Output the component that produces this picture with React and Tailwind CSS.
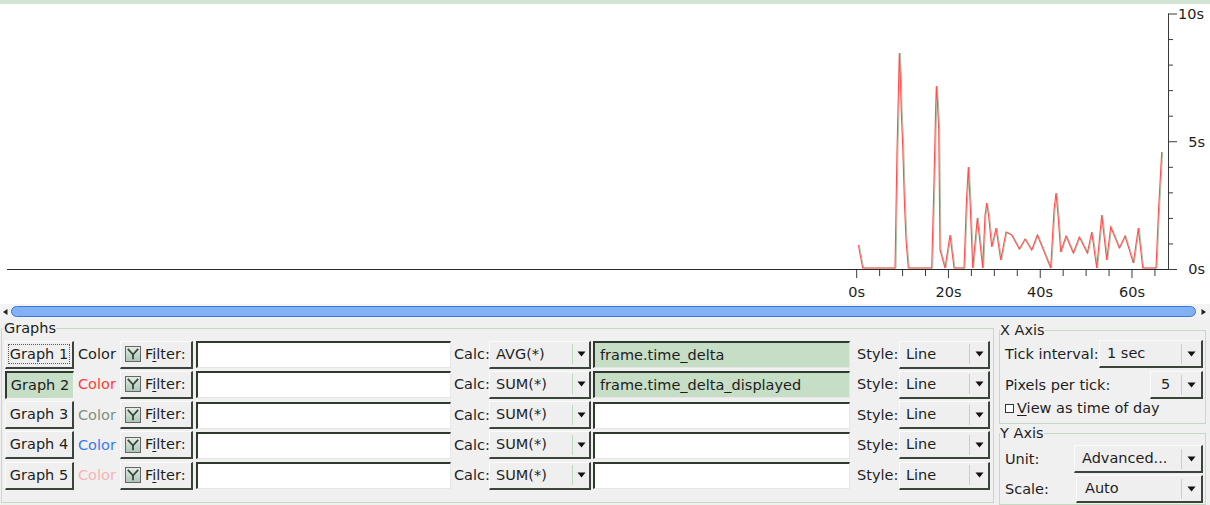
import React from "react";

const redLine = [
  [858.3, 245], [862.7, 268], [895, 268], [897, 150], [898.2, 100], [899.3, 53], [900.3, 75],
  [901.2, 110], [902.7, 146], [904.5, 205], [906, 240], [908.3, 268], [931.7, 268], [934, 180],
  [935.6, 110], [936.3, 86], [937.3, 100], [938.7, 130], [940, 250], [945, 268], [950, 235],
  [954, 268], [964, 268], [966.5, 200], [968.3, 167], [970, 200], [972.7, 268], [977.3, 218],
  [982.7, 268], [985, 215], [986.7, 203], [988.5, 215], [991.7, 247], [996, 228], [1000.7, 260],
  [1006, 232], [1011.7, 235], [1019.3, 249], [1025, 239], [1031.7, 250], [1037.3, 235],
  [1050.7, 268], [1054, 210], [1056, 193], [1058, 215], [1060.7, 252], [1066, 236],
  [1073.3, 253], [1079.3, 237], [1087.3, 253], [1091.7, 232], [1096.7, 268], [1101.7, 215],
  [1106.7, 260], [1110.7, 227], [1119.3, 248], [1125, 236], [1133.3, 263], [1138.3, 228],
  [1142.7, 268], [1156, 268], [1158.5, 210], [1161.7, 152],
];

const toPoints = (arr, dx = 0) => arr.map(([x, y]) => `${x + dx},${y}`).join(" ");

const Chart = () => {
  const yTicks = Array.from({ length: 11 }, (_, i) => 269.5 - i * 25.55);
  const xTicks = Array.from({ length: 14 }, (_, i) => 856.7 + i * 22.94);
  return (
    <svg width="1210" height="300" viewBox="0 4 1210 300" className="block bg-white">
      <line x1="7" y1="269.5" x2="1168" y2="269.5" stroke="#2a2a2a" strokeWidth="1" />
      <line x1="1168.5" y1="13.5" x2="1168.5" y2="270" stroke="#3a3a3a" strokeWidth="1" />
      {yTicks.map((y, i) => (
        <line
          key={i}
          x1="1168"
          y1={y}
          x2={i % 5 === 0 ? 1177 : 1173}
          y2={y}
          stroke="#3a3a3a"
          strokeWidth="1"
        />
      ))}
      {xTicks.map((x, i) => (
        <line
          key={i}
          x1={x}
          y1="270"
          x2={x}
          y2={i % 4 === 0 ? 278 : 276}
          stroke="#3a3a3a"
          strokeWidth="1"
        />
      ))}
      <polyline points={toPoints(redLine, 1)} fill="none" stroke="#a9c9a9" strokeWidth="1" />
      <polyline points={toPoints(redLine)} fill="none" stroke="#ff4f4f" strokeWidth="1.1" />
      <g fill="#1e1e1e" fontSize="14.5" fontFamily="DejaVu Sans, sans-serif">
        <text x="1178" y="19">10s</text>
        <text x="1205" y="147" textAnchor="end">5s</text>
        <text x="1205" y="274" textAnchor="end">0s</text>
        <text x="856.7" y="297" textAnchor="middle">0s</text>
        <text x="948.5" y="297" textAnchor="middle">20s</text>
        <text x="1040" y="297" textAnchor="middle">40s</text>
        <text x="1132" y="297" textAnchor="middle">60s</text>
      </g>
    </svg>
  );
};

const Arrow = () => (
  <svg width="9" height="6" viewBox="0 0 9 6">
    <path d="M0.5 0.5 H8.5 L4.5 5.5 Z" fill="#111" />
  </svg>
);

const Combo = ({ value, width, pad = "pl-[6px]", arrowW = "w-[16px]" }) => (
  <div
    className={`flex h-[28px] shrink-0 items-center bg-[#efefef] border-t border-l border-t-[#fbfbfb] border-l-[#fbfbfb] border-r-2 border-b-2 border-r-[#3a443a] border-b-[#3a443a] ${width}`}
  >
    <span className={`flex-1 ${pad}`}>{value}</span>
    <span className="h-[20px] w-px bg-[#bcd8bc]" />
    <span className={`flex justify-center ${arrowW}`}>
      <Arrow />
    </span>
  </div>
);

const Field = ({ value, width, green }) => (
  <div
    className={`flex h-[27px] shrink-0 items-center pl-[5px] border-t-2 border-l-2 border-t-[#2f3a2f] border-l-[#2f3a2f] border-b border-r border-b-[#e6e6e6] border-r-[#e6e6e6] ${width} ${
      green ? "bg-[#c6ddc6]" : "bg-white"
    }`}
  >
    {value}
  </div>
);

const FilterIcon = () => (
  <svg width="16" height="16" viewBox="0 0 16 16">
    <defs>
      <linearGradient id="fg" x1="0" y1="0" x2="0" y2="1">
        <stop offset="0" stopColor="#e4eee4" />
        <stop offset="1" stopColor="#a9c6b6" />
      </linearGradient>
    </defs>
    <rect x="0.5" y="0.5" width="15" height="15" fill="url(#fg)" stroke="#666" />
    <path d="M2.8 2.8 L8 8.5 L13.2 2.8" fill="none" stroke="#3c453c" strokeWidth="1.8" />
    <path d="M8 8 V13.2" stroke="#3c453c" strokeWidth="1.8" />
  </svg>
);

const graphs = [
  { n: 1, color: "text-[#1e1e1e]", calc: "AVG(*)", field: "frame.time_delta", focus: true },
  { n: 2, color: "text-[#ff3b3b]", calc: "SUM(*)", field: "frame.time_delta_displayed", pressed: true },
  { n: 3, color: "text-[#7f907f]", calc: "SUM(*)", field: "" },
  { n: 4, color: "text-[#3a7af0]", calc: "SUM(*)", field: "" },
  { n: 5, color: "text-[#f6b4b4]", calc: "SUM(*)", field: "" },
];

const GraphRow = ({ g }) => (
  <div className="flex h-[28px] items-center">
    {g.pressed ? (
      <button className="flex h-[28px] w-[69px] shrink-0 items-center justify-center bg-[#c6ddc6] border-t-2 border-l-2 border-t-[#2f3a2f] border-l-[#2f3a2f] border-b border-r border-b-[#f4f4f4] border-r-[#f4f4f4]">
        Graph {g.n}
      </button>
    ) : (
      <button className="flex h-[28px] w-[69px] shrink-0 items-center justify-center bg-[#efefef] border-t border-l border-t-[#fbfbfb] border-l-[#fbfbfb] border-r-2 border-b-2 border-r-[#3a443a] border-b-[#3a443a]">
        <span className={g.focus ? "border border-dotted border-[#5a5a5a] px-[1px] leading-[18px]" : ""}>
          Graph {g.n}
        </span>
      </button>
    )}
    <span className={`w-[46px] shrink-0 pl-[4px] ${g.color}`}>Color</span>
    <button className="flex h-[28px] w-[73px] shrink-0 items-center gap-[4px] pl-[4px] bg-[#efefef] border-t border-l border-t-[#fbfbfb] border-l-[#fbfbfb] border-r-2 border-b-2 border-r-[#3a443a] border-b-[#3a443a]">
      <FilterIcon />
      <span>
        F<span className="underline underline-offset-2">i</span>lter:
      </span>
    </button>
    <span className="w-[3px] shrink-0" />
    <Field width="w-[255px]" />
    <span className="w-[38px] shrink-0 pl-[3px]">Calc:</span>
    <Combo value={g.calc} width="w-[102px]" />
    <span className="w-[2px] shrink-0" />
    <Field width="w-[257px]" value={g.field} green={!!g.field} />
    <span className="w-[49px] shrink-0 pl-[7px]">Style:</span>
    <Combo value="Line" width="w-[91px]" arrowW="w-[18px]" />
  </div>
);

export default function App() {
  return (
    <div className="w-[1210px] h-[505px] overflow-hidden bg-[#f0f0f0] text-[14.5px] leading-[17px] text-[#1e1e1e] font-['DejaVu_Sans',sans-serif]">
      <div className="h-[4px] bg-[#d2e5d2]" />
      <Chart />

      <div className="flex h-[14px] bg-[#f3f3f3]">
        <div className="flex w-[11px] items-center justify-center pt-[2px]">
          <svg width="5" height="6" viewBox="0 0 5 6">
            <path d="M4.5 0 V6 L0 3 Z" fill="#222" />
          </svg>
        </div>
        <div className="mt-[2px] h-[11px] flex-1 rounded-full bg-[#82b2f4] border border-[#3878de]" />
        <div className="flex w-[14px] items-center justify-center pt-[2px]">
          <svg width="5" height="6" viewBox="0 0 5 6">
            <path d="M0.5 0 V6 L5 3 Z" fill="#222" />
          </svg>
        </div>
      </div>

      <div className="flex pl-[1px]">
        <fieldset className="mt-[2px] h-[183px] w-[993px] shrink-0 border border-[#c3dac3]">
          <legend className="leading-[17px] pl-[2px]">Graphs</legend>
          <div className="flex flex-col gap-[2.25px] pl-[3px] pt-[3.5px]">
            {graphs.map((g) => (
              <GraphRow key={g.n} g={g} />
            ))}
          </div>
        </fieldset>

        <div className="ml-[5px] flex w-[207px] shrink-0 flex-col">
          <fieldset className="mt-[4px] border border-[#c3dac3]">
            <legend className="leading-[17px]">X Axis</legend>
            <div className="flex flex-col pl-[5px] pr-[1px] pt-[1px] pb-[5px]">
              <div className="flex h-[28px] items-center">
                <span className="w-[94px] shrink-0">Tick interval:</span>
                <Combo value="1 sec" width="w-[104px]" pad="pl-[7px]" arrowW="w-[19px]" />
              </div>
              <div className="mt-[3px] flex h-[28px] items-center">
                <span className="w-[145px] shrink-0">Pixels per tick:</span>
                <Combo value="5" width="w-[53px]" pad="pl-[10px]" arrowW="w-[19px]" />
              </div>
              <div className="flex h-[19px] items-center">
                <span className="h-[9px] w-[9px] border border-[#333] bg-white" />
                <span className="pl-[3px]">
                  <span className="underline underline-offset-2">V</span>iew as time of day
                </span>
              </div>
            </div>
          </fieldset>
          <fieldset className="mt-[1px] border border-[#c3dac3]">
            <legend className="leading-[17px]">Y Axis</legend>
            <div className="flex flex-col gap-[2px] pl-[5px] pr-[1px] pt-[3px] pb-[1px]">
              <div className="flex h-[28px] items-center">
                <span className="w-[69px] shrink-0">Unit:</span>
                <Combo value="Advanced..." width="w-[129px]" pad="pl-[7px]" arrowW="w-[19px]" />
              </div>
              <div className="flex h-[28px] items-center">
                <span className="w-[71px] shrink-0">Scale:</span>
                <Combo value="Auto" width="w-[127px]" pad="pl-[8px]" arrowW="w-[19px]" />
              </div>
            </div>
          </fieldset>
        </div>
      </div>
    </div>
  );
}
